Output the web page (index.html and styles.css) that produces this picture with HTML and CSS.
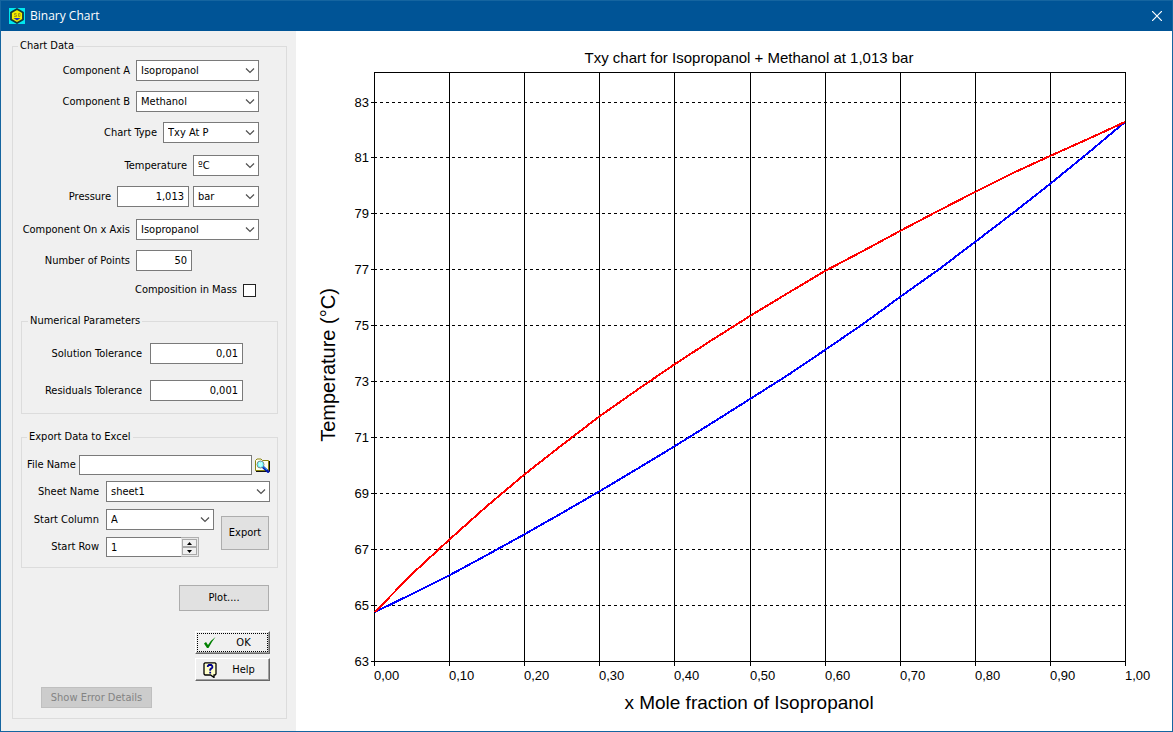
FILE: index.html
```html
<!DOCTYPE html>
<html lang="en">
<head>
<meta charset="utf-8">
<title>Binary Chart</title>
<link rel="stylesheet" href="styles.css">
</head>
<body>
<div class="window">
  <header class="titlebar">
    <svg class="app-icon" viewBox="0 0 16 16" aria-hidden="true">
      <rect width="16" height="16" fill="#00e8f0"/>
      <path d="M8 1 14 4.500V11.500L8 15 2 11.500V4.500Z" fill="#f4ee00" stroke="#12383c" stroke-width="1.800"/>
      <path d="M4.500 10h7L8 12.500Z" fill="#1c30c0"/>
      <path d="M7.500 5.500H5.500v1.500h2v1.500H5M9.500 5.500h1.500v3H9.500Z" fill="none" stroke="#a89a10"/>
    </svg>
    <h1 class="title">Binary Chart</h1>
    <button class="close" type="button" aria-label="Close">
      <svg viewBox="0 0 10 10" width="10" height="10"><path d="M0 0 10 10M10 0 0 10" fill="none" stroke="#fff" stroke-width="1.200"/></svg>
    </button>
  </header>
  <div class="body">
    <form class="sidebar">
      <fieldset class="group group-main">
        <legend>Chart Data</legend>
        <div class="rows">
          <div class="row"><label for="compA">Component A</label><select id="compA" class="ctl w-l"><option>Isopropanol</option></select></div>
          <div class="row"><label for="compB">Component B</label><select id="compB" class="ctl w-l"><option>Methanol</option></select></div>
          <div class="row"><label for="ctype">Chart Type</label><select id="ctype" class="ctl w-m"><option>Txy At P</option></select></div>
        </div>
        <div class="rows">
          <div class="row"><label for="tunit">Temperature</label><select id="tunit" class="ctl w-s"><option>ºC</option></select></div>
          <div class="row"><label for="press">Pressure</label><div class="pair"><input id="press" class="ctl num w-p" type="text" value="1,013"><select class="ctl w-s" aria-label="Pressure unit"><option>bar</option></select></div></div>
        </div>
        <div class="rows">
          <div class="row"><label for="xaxis">Component On x Axis</label><select id="xaxis" class="ctl w-l"><option>Isopropanol</option></select></div>
          <div class="row"><label for="points">Number of Points</label><div class="w-l slot"><input id="points" class="ctl num w-n" type="text" value="50"></div></div>
          <div class="row row-check"><label for="mass">Composition in Mass</label><input id="mass" class="check" type="checkbox"></div>
        </div>

        <fieldset class="group group-num">
          <legend>Numerical Parameters</legend>
          <div class="row"><label for="sol">Solution Tolerance</label><input id="sol" class="ctl num w-t" type="text" value="0,01"></div>
          <div class="row"><label for="res">Residuals Tolerance</label><input id="res" class="ctl num w-t" type="text" value="0,001"></div>
        </fieldset>

        <fieldset class="group group-export">
          <legend>Export Data to Excel</legend>
          <div class="file-row">
            <label for="file">File Name</label>
            <input id="file" class="ctl" type="text">
            <button class="browse" type="button" aria-label="Browse">
              <svg viewBox="0 0 16 15" width="16" height="15">
                <path d="M1.500 12.500V2.500L3 1h4l1.500 1.500h6V12.500Z" fill="#fffff0" stroke="#8a8410"/>
                <path d="M2 13.500h13.500V3" fill="none" stroke="#111"/>
                <circle cx="6.500" cy="6.500" r="3.500" fill="#7ff" stroke="#78888c"/>
                <path d="M5 5h1M7 5h1M6 6h1M5 7h1M7 7h1M6 8h1" stroke="#fff"/>
                <path d="M9 9l6 5.500" stroke="#0018b0" stroke-width="2.500"/>
                <path d="M9 8.500l4 3.500" stroke="#20a8f0"/>
              </svg>
            </button>
          </div>
          <div class="export-grid">
            <label for="sheet">Sheet Name</label>
            <select id="sheet" class="ctl wide"><option>sheet1</option></select>
            <label for="col">Start Column</label>
            <select id="col" class="ctl"><option>A</option></select>
            <button class="btn btn-export" type="button">Export</button>
            <label for="srow">Start Row</label>
            <div class="spin">
              <input id="srow" class="ctl" type="text" value="1">
              <div class="spin-btns">
                <button type="button" aria-label="Increase"><svg viewBox="0 0 5 3" width="5" height="3"><path d="M2.500 0 5 3H0Z"/></svg></button>
                <button type="button" aria-label="Decrease"><svg viewBox="0 0 5 3" width="5" height="3"><path d="M0 0H5L2.500 3Z"/></svg></button>
              </div>
            </div>
          </div>
        </fieldset>

        <div class="actions">
          <button class="btn btn-plot" type="button">Plot....</button>
          <button class="btn3d btn-ok" type="submit">
            <svg viewBox="0 0 14 14" width="14" height="14"><path d="M1 7.500 3 6l2 3Q8 4 12.500 1 8.500 6 5.500 12H4Z" fill="#008000"/></svg>
            <span>OK</span>
          </button>
          <button class="btn3d" type="button">
            <svg viewBox="0 0 14 16" width="14" height="16">
              <path d="M2 .8h10l1 1V12l-1 1h-1v2.500L7.500 13H2l-1-1V1.800Z" fill="#ffffc8" stroke="#000" stroke-width="1.300"/>
              <path d="M4.800 5V4l1-1h2.500l1 1v1.500L7.200 7.500v1.300M7.200 9.800v1.700" fill="none" stroke="#000090" stroke-width="1.800"/>
            </svg>
            <span>Help</span>
          </button>
        </div>
        <button class="btn btn-error" type="button" disabled>Show Error Details</button>
      </fieldset>
    </form>

    <main class="chart">
      <svg class="plot" viewBox="296 31 876 700" role="img" aria-label="Txy chart">
        <text class="heading" x="749" y="63">Txy chart for Isopropanol + Methanol at 1,013 bar</text>
        <g class="grid">
          <path d="M374.500 72.500H1125.500M371 661.500H1125.500"/>
          <path d="M374.500 72V666M449.500 72V666M524.500 72V666M599.500 72V666M674.500 72V666M750.500 72V666M825.500 72V666M900.500 72V666M975.500 72V666M1050.500 72V666M1125.500 72V666"/>
          <path d="M371 102.500h4M371 157.500h4M371 213.500h4M371 269.500h4M371 325.500h4M371 381.500h4M371 437.500h4M371 493.500h4M371 549.500h4M371 605.500h4"/>
          <path class="dash" d="M374 102.500H1125M374 157.500H1125M374 213.500H1125M374 269.500H1125M374 325.500H1125M374 381.500H1125M374 437.500H1125M374 493.500H1125M374 549.500H1125M374 605.500H1125"/>
        </g>
        <polyline class="curve liquid" points="375,612 412,594 450,575 487,555 525,534 562,513 600,491 637,469 675,446 712,423 750,399 788,375 825,350 863,324 900,297 938,270 975,242 1013,213 1050,184 1088,153 1125,122"/>
        <polyline class="curve vapour" points="375,612 412,574 450,539 487,506 525,474 562,445 600,416 637,390 675,364 712,340 750,316 788,293 825,271 863,251 900,231 938,211 975,192 1013,173 1050,156 1088,139 1125,122"/>
        <g class="ylabels">
          <text x="369" y="107">83</text><text x="369" y="162">81</text><text x="369" y="218">79</text><text x="369" y="274">77</text><text x="369" y="330">75</text><text x="369" y="386">73</text><text x="369" y="442">71</text><text x="369" y="498">69</text><text x="369" y="554">67</text><text x="369" y="610">65</text><text x="369" y="666">63</text>
        </g>
        <g class="xlabels">
          <text x="374" y="680">0,00</text><text x="449" y="680">0,10</text><text x="524" y="680">0,20</text><text x="599" y="680">0,30</text><text x="674" y="680">0,40</text><text x="750" y="680">0,50</text><text x="825" y="680">0,60</text><text x="900" y="680">0,70</text><text x="975" y="680">0,80</text><text x="1050" y="680">0,90</text><text x="1125" y="680">1,00</text>
        </g>
        <text class="axis-title" x="749" y="709">x Mole fraction of Isopropanol</text>
        <text class="axis-title axis-title-y" transform="translate(335 365) rotate(-90)">Temperature (°C)</text>
      </svg>
    </main>
  </div>
</div>
</body>
</html>
```
FILE: styles.css
```css
* { box-sizing: border-box; }

body {
  margin: 0;
  font: 11px/14px "DejaVu Sans Condensed", "Open Sans", sans-serif;
  color: #000;
}

button, input, select { font: inherit; color: inherit; }

.window {
  min-height: 100vh;
  display: flex;
  flex-direction: column;
  border: 1px solid #1565a0;
}

.titlebar {
  display: flex;
  align-items: center;
  gap: 5px;
  height: 30px;
  padding: 0 10px 0 8px;
  background: #005496;
  color: #fff;
}
.app-icon { width: 16px; height: 16px; }
.title { flex: 1; margin: 0; font: 12px/16px "Open Sans", sans-serif; }
.close { display: flex; padding: 0; border: 0; background: none; }

.body { flex: 1; display: flex; }

.sidebar {
  flex: none;
  width: 295px;
  padding: 8px 9px 12px 11px;
  background: #f0f0f0;
}

.group { margin: 0; min-width: 0; border: 1px solid #dcdcdc; }
.group > legend { padding: 0 2px; }
.group-main { height: 100%; padding: 7px 8px 10px; }
.group-main > legend { margin-left: -3px; }

.rows {
  display: flex;
  flex-direction: column;
  gap: 10px;
  margin-bottom: 12px;
  padding-right: 19px;
}
.row { display: flex; align-items: center; justify-content: flex-end; gap: 6px; }
.row-check { height: 18px; padding-right: 3px; }
.pair { display: flex; gap: 4px; }
.slot { display: flex; }

.ctl {
  height: 21px;
  padding: 0 4px;
  border: 1px solid #7a7a7a;
  border-radius: 0;
  background-color: #fff;
}
select.ctl {
  appearance: none;
  background-image: url("data:image/svg+xml,%3Csvg xmlns='http://www.w3.org/2000/svg' width='10' height='6'%3E%3Cpath d='M1 .5 5 4.500 9 .5' fill='none' stroke='%23505050' stroke-width='1.200'/%3E%3C/svg%3E");
  background-repeat: no-repeat;
  background-position: right 3px center;
}
.num { text-align: right; }
.w-l { width: 123px; }
.w-m { width: 96px; }
.w-s { width: 66px; }
.w-p { width: 72px; }
.w-n { width: 56px; }
.w-t { width: 93px; }

.check {
  appearance: none;
  width: 13px;
  height: 13px;
  margin: 0;
  border: 1px solid #222;
  background: #fff;
}

.group-num {
  display: flex;
  flex-direction: column;
  gap: 16px;
  margin-top: 15px;
  padding: 15px 34px 12px 6px;
}
.group-num .row { gap: 8px; }

.group-export { margin-top: 16px; padding: 11px 7px 10px 5px; }
.file-row { display: flex; align-items: center; gap: 2px; }
.file-row label { flex: none; width: 50px; }
.file-row .ctl { flex: 1; min-width: 0; height: 20px; }
.browse { display: flex; padding: 0; border: 0; background: none; }

.export-grid {
  display: grid;
  grid-template-columns: 72px 108px 1fr;
  gap: 7px;
  margin-top: 6px;
  align-items: center;
}
.export-grid label { text-align: right; }
.export-grid .wide { grid-column: 2 / 4; }
.btn-export { grid-column: 3; grid-row: 2 / 4; height: 34px; width: 48px; }

.spin { display: flex; width: 93px; height: 20px; }
.spin .ctl { flex: 1; min-width: 0; height: 20px; border-right: 0; }
.spin-btns {
  display: flex;
  flex-direction: column;
  width: 18px;
  padding: 1px;
  border: 1px solid #b0b0b0;
  border-left: 0;
  background: #e8e8e8;
}
.spin-btns button {
  flex: 1;
  display: flex;
  align-items: center;
  justify-content: center;
  padding: 0;
  border: 1px solid #a8a8a8;
  background: #f0f0f0;
}

.btn { padding: 0; border: 1px solid #adadad; background: #e1e1e1; }
.actions {
  display: flex;
  flex-direction: column;
  align-items: flex-end;
  gap: 4px;
  padding-right: 8px;
  margin-top: 17px;
}
.btn-plot { width: 90px; height: 26px; margin: 0 1px 16px 0; }
.btn3d {
  display: flex;
  align-items: center;
  width: 75px;
  height: 23px;
  padding: 0 7px;
  border: 1px solid;
  border-color: #fff #696969 #696969 #fff;
  background: #f0f0f0;
  box-shadow: inset -1px -1px #a0a0a0;
}
.btn3d span { flex: 1; padding-left: 8px; text-align: center; }
.btn-ok { outline: 1px dotted #000; outline-offset: -3px; }
.btn-error {
  width: 111px;
  height: 21px;
  margin: 6px 0 0 20px;
  border-color: #bfbfbf;
  background: #ccc;
  color: #838383;
}

.chart { flex: 1; min-width: 0; background: #fff; }
.plot { display: block; width: 100%; height: 100%; font-family: "Liberation Sans", Arial, sans-serif; font-size: 13px; }
.heading { font-size: 15px; text-anchor: middle; }
.axis-title { font-size: 19px; text-anchor: middle; }
.axis-title-y { font-size: 20px; }
.ylabels { text-anchor: end; }
.grid path { fill: none; stroke: #000; shape-rendering: crispEdges; }
.grid .dash { stroke-dasharray: 3 3; }
.curve { fill: none; stroke-width: 2; shape-rendering: crispEdges; }
.liquid { stroke: #00f; }
.vapour { stroke: #f00; }
```
